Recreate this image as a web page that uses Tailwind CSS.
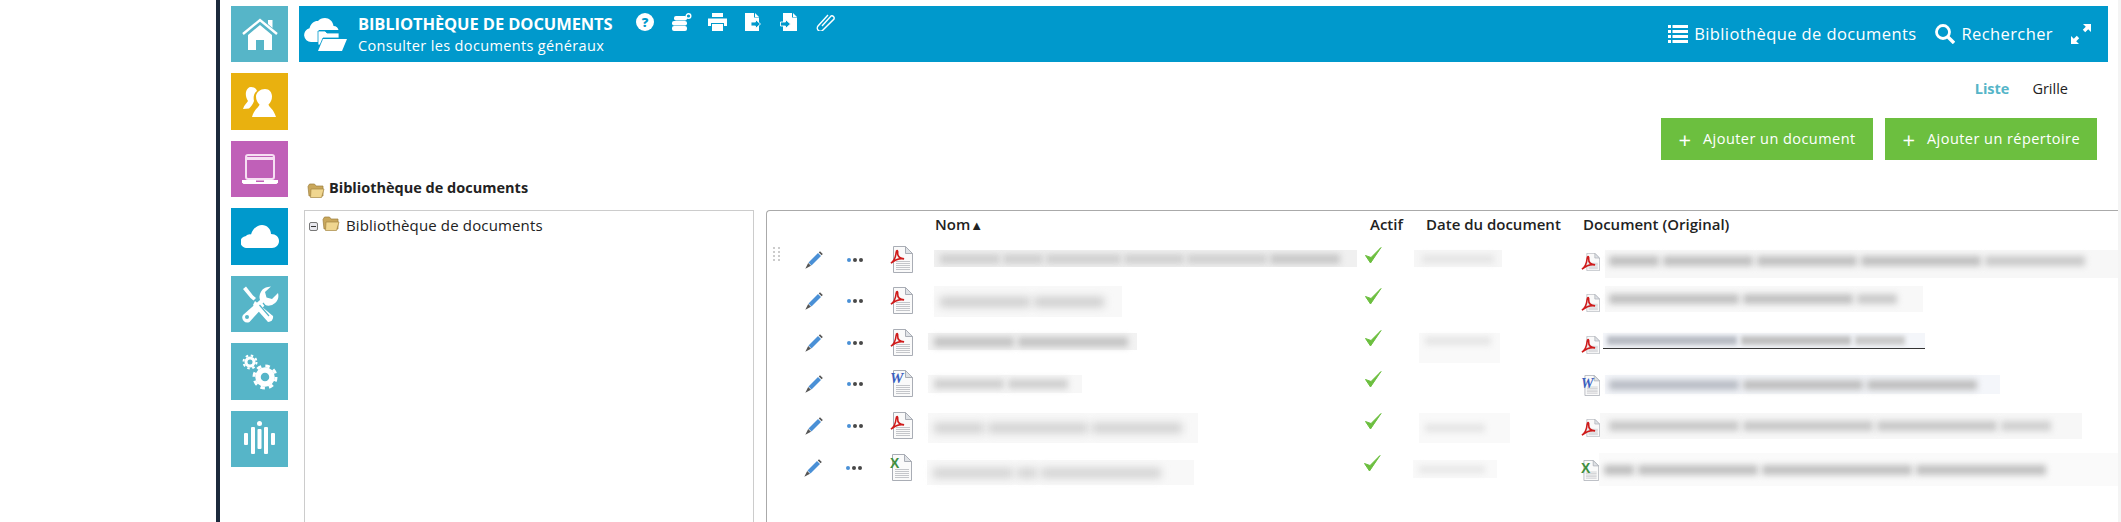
<!DOCTYPE html>
<html lang="fr">
  <head>
    <meta charset="UTF-8" />
    <script src="https://cdn.jsdelivr.net/npm/@tailwindcss/browser@4"></script>
    <title>Bibliothèque de documents</title>
  </head>
  <body class="bg-white font-['Open_Sans',sans-serif] text-[#222] overflow-hidden">
    <!-- shared icons -->
    <svg class="hidden">
      <symbol id="pencil" viewBox="0 0 18 18">
        <path d="M3.500 11.500 13 2l3 3-9.500 9.500z" fill="#4a90d6" />
        <path d="M13.800 1.400 15 .2l2.800 2.800-1.200 1.200z" fill="#555" />
        <path d="M3.200 12 6 14.800 .3 17.700z" fill="#555" />
      </symbol>
      <symbol id="dots" viewBox="0 0 16 4">
        <circle cx="2" cy="2" r="2" fill="#4a90d6" />
        <circle cx="8" cy="2" r="2" fill="#484848" />
        <circle cx="14" cy="2" r="2" fill="#484848" />
      </symbol>
      <symbol id="page" viewBox="0 0 22 27">
        <path d="M2.500.5h12l7 7v19h-19z" fill="#fafafa" stroke="#a9adb5" />
        <path d="M14.500.5v7h7z" fill="#dfe2e6" stroke="#a9adb5" />
        <path d="M5 15.500h14M5 17.500h14M5 19.500h14M5 21.500h14M5 23.500h14" stroke="#c4c6ca" />
      </symbol>
      <symbol id="adobe" viewBox="0 0 16 16">
        <path d="M1 15c3-2 5-6 5.500-11 .2-3 2-3 1.700 0C8 7 10 10 15 10.500c-4-.8-9 .5-14 4.500z" fill="none" stroke="#cf1b1b" stroke-width="1.700" />
      </symbol>
      <symbol id="check" viewBox="0 0 18 18">
        <path d="M1.500 9.500 6.500 17 17 1.500 7 11.500z" fill="#6cbf3f" stroke="#6cbf3f" stroke-linejoin="round" />
      </symbol>
      <symbol id="folder" viewBox="0 0 18 16">
        <path d="M1 4.500 2.500 2h5l1.500 2h7v10H2z" fill="#c9a75b" stroke="#9c7e3c" stroke-width=".7" />
        <path d="M4 7h13l-2.500 8.500H3.500z" fill="#f0d68f" stroke="#a58744" stroke-width=".7" />
      </symbol>
    </svg>

    <div class="flex h-[522px] w-[2121px]">
      <div class="w-[216px] shrink-0"></div>
      <div class="w-[4px] shrink-0 bg-[#1c2a3c]"></div>

      <!-- tiles -->
      <nav class="w-[79px] shrink-0 pt-[6px] pl-[11px] flex flex-col gap-[11px]">
        <a class="w-[57px] h-[56px] bg-[#56b5c8] flex items-center justify-center">
          <svg class="w-[36px] h-[32px]" viewBox="0 0 36 32" fill="#fff"><path d="M1 16 18 2l17 14" fill="none" stroke="#fff" stroke-width="2.400" /><path d="M26 2h4.500v8L26 6z" /><path d="M6 17 18 7l12 10v15h-8V22h-8v10H6z" /></svg>
        </a>
        <a class="w-[57px] h-[57px] bg-[#e9b10f] flex items-center justify-center">
          <svg class="w-[34px] h-[32px]" viewBox="0 0 34 32" fill="#fff"><path d="M8 1c3.500 0 5.500 2 6 4-3 2-4 6-3 10-1 3-3 6-5 7.500l-6 .5c1-4 4-6 5-8C3 12 2.500 9 3 6c.6-3 2.600-5 5-5z" /><path d="M22 3c4.500 0 7 3.500 7 7.500 0 3.500-1.500 6-3.500 8 .5 3 5 4 7.500 12.500H9c2-8 7-9.500 7.500-12.500-2-2-3.500-4.500-3.500-8C13 6.500 17.500 3 22 3z" /></svg>
        </a>
        <a class="w-[57px] h-[56px] bg-[#c060b8] flex items-center justify-center">
          <svg class="w-[36px] h-[30px]" viewBox="0 0 36 30" fill="#fff"><rect x="4" y="1" width="28" height="24" rx="2" fill="none" stroke="#f6dff3" stroke-width="2" /><path d="M5 3h26v3H5z" fill="#f6dff3" /><path d="M0 26h36v2.500l-1.500 1.500h-33L0 28.500z" /><path d="M14 26.500h8v1.500h-8z" fill="#c060b8" /></svg>
        </a>
        <a class="w-[57px] h-[57px] bg-[#0099cc] flex items-center justify-center">
          <svg class="w-[38px] h-[23px]" viewBox="0 0 38 23" fill="#fff"><path d="M6 23a6 6 0 0 1-1-12c1-1 3-2 5-1.500C12 3 17 0 21 0c5 0 9 4 9 9 5 0 8 3 8 7 0 4-3 7-7 7z" /></svg>
        </a>
        <a class="w-[57px] h-[56px] bg-[#56b5c8] flex items-center justify-center">
          <svg class="w-[38px] h-[37px]" viewBox="0 0 38 37" fill="#fff">
            <path d="M2 3 5 .5l7 9 3 2.500-2.500 2.500-3-2.500z" />
            <path d="M27 1a10 10 0 0 0-8 13L2 29a5 5 0 0 0 6.500 7L24 19a10 10 0 0 0 13-12l-6 6-5.500-1.500L24 6l6-5.500z" fill="#fff" />
            <circle cx="6" cy="31" r="2" fill="#56b5c8" />
            <path d="m14 15 18 15a5 5 0 0 1-5 6L12 19z" fill="#fff" />
            <path d="m18.500 19 9.500 11M22 17l9 11" stroke="#56b5c8" stroke-width="1.200" />
          </svg>
        </a>
        <a class="w-[57px] h-[57px] bg-[#56b5c8] flex items-center justify-center">
          <svg class="w-[36px] h-[36px]" viewBox="0 0 36 36" fill="none" stroke="#fff">
            <circle cx="8" cy="8" r="4" stroke-width="3" />
            <circle cx="8" cy="8" r="6.500" stroke-width="2" stroke-dasharray="2.500 2.600" />
            <circle cx="23" cy="23" r="7" stroke-width="5.500" />
            <circle cx="23" cy="23" r="11" stroke-width="3" stroke-dasharray="4.500 4.140" />
          </svg>
        </a>
        <a class="w-[57px] h-[56px] bg-[#56b5c8] flex items-center justify-center">
          <svg class="w-[32px] h-[36px]" viewBox="0 0 32 36" fill="#fff">
            <rect x="0" y="12" width="4" height="12" rx="1" />
            <rect x="7" y="6" width="4" height="27" rx="1" />
            <circle cx="15.500" cy="2.500" r="2.500" />
            <rect x="13.500" y="8" width="4" height="20" rx="1" />
            <rect x="20" y="6" width="4" height="27" rx="1" />
            <rect x="27" y="12" width="4" height="12" rx="1" />
          </svg>
        </a>
      </nav>

      <main class="w-[1819px] shrink-0 flex flex-col">
        <!-- blue header -->
        <header class="mt-[6px] h-[56px] w-[1809px] shrink-0 bg-[#0099cc] text-white flex items-center">
          <svg class="ml-[5px] w-[43px] h-[33px] shrink-0" viewBox="0 0 43 33" fill="#fff">
            <path d="M7 24a7 7 0 0 1-1.500-13.800C7 5 11 2.500 14 3c1.500-2 4-3 7-3 4 0 8 3 8.500 8 3 0 4.500 2 5 4H15v12z" />
            <path d="M14 13h7l2 2h12v5H19l-3 7h-2z" stroke="#0099cc" stroke-width=".8" />
            <path d="M19 21h24l-5 12H14z" />
          </svg>
          <div class="ml-[11px] w-[266px] shrink-0">
            <h1 class="text-[16.500px] leading-[20px] font-bold tracking-[-0.1px] uppercase">Bibliothèque de documents</h1>
            <p class="mt-[3px] text-[14.500px] leading-[18px] tracking-[0.35px]">Consulter les documents généraux</p>
          </div>
          <div class="self-start mt-[7px] flex items-start">
            <span class="ml-[12px] w-[18px] h-[18px] rounded-full bg-white text-[#0099cc] text-[13px] leading-[18px] font-extrabold text-center">?</span>
            <svg class="ml-[18px] w-[20px] h-[18px]" viewBox="0 0 20 18" fill="#fff"><rect x="2" y="3" width="13" height="4.500" rx="2" /><rect x="0" y="8" width="15" height="4.500" rx="2" /><rect x="0" y="13" width="15" height="5" rx="2" /><circle cx="16.500" cy="3" r="2.300" fill="none" stroke="#fff" stroke-width="1.400" /></svg>
            <svg class="ml-[16px] w-[19px] h-[18px]" viewBox="0 0 19 18" fill="#fff"><path d="M4 0h11v4H4zM0 5.500h19V13h-3v-3H3v3H0zM4 11h11v7H4z" /></svg>
            <svg class="ml-[18px] w-[16px] h-[18px]" viewBox="0 0 16 18"><path d="M0 0h9v4.500h5V18H0z" fill="#fff" /><path d="M10 0l4 4h-4z" fill="#fff" /><path d="M6 9h4.500V6.500L15.500 11l-5 4.500V13H6z" fill="#0099cc" stroke="#fff" stroke-width=".9" /></svg>
            <svg class="ml-[19px] w-[17px] h-[18px]" viewBox="0 0 17 18"><path d="M3 0h9v4.500h5V18H3z" fill="#fff" /><path d="M13 0l4 4h-4z" fill="#fff" /><path d="M.5 9h5V6.500l5 4.500-5 4.500V13h-5z" fill="#0099cc" stroke="#fff" stroke-width=".9" /></svg>
            <svg class="ml-[19px] w-[19px] h-[18px]" viewBox="0 0 19 18" fill="none" stroke="#fff" stroke-width="1.400"><path d="M6 13 15 3a2.300 2.300 0 0 1 3 3L7 17a3 3 0 0 1-5-4L12 2" /></svg>
          </div>

          <div class="ml-auto flex items-center text-[16.500px] leading-[20px] tracking-[0.4px]">
            <svg class="w-[20px] h-[18px]" viewBox="0 0 20 18" fill="#fff"><path d="M0 0h3v3H0zM4.500 0H20v3H4.500zM0 5h3v3H0zM4.500 5H20v3H4.500zM0 10h3v3H0zM4.500 10H20v3H4.500zM0 15h3v3H0zM4.500 15H20v3H4.500z" /></svg>
            <span class="ml-[6px]">Bibliothèque de documents</span>
            <svg class="ml-[19px] w-[20px] h-[20px]" viewBox="0 0 20 20" fill="none" stroke="#fff"><circle cx="8" cy="8" r="6.500" stroke-width="2.800" /><path d="m13 13 6 6" stroke-width="3.400" /></svg>
            <span class="ml-[6px]">Rechercher</span>
            <svg class="ml-[18px] mr-[17px] w-[20px] h-[20px]" viewBox="0 0 20 20" fill="#fff"><path d="M12 0h8v8l-2.800-2.800-3 3-2.400-2.400 3-3zM0 20v-8l2.800 2.800 3-3 2.400 2.400-3 3L8 20z" /></svg>
          </div>
        </header>

        <!-- list / grid switch -->
        <div class="mt-[17px] h-[20px] w-[1769px] flex justify-end text-[14.500px] leading-[20px] shrink-0">
          <span class="font-bold text-[#56b5c8]">Liste</span>
          <span class="ml-[23px]">Grille</span>
        </div>

        <!-- actions -->
        <div class="mt-[19px] h-[42px] w-[1798px] flex justify-end gap-[12px] shrink-0 text-white text-[14.500px] tracking-[0.45px]">
          <button class="w-[212px] h-[42px] bg-[#6cbf3f] flex items-center pl-[17px]"><span class="w-[14px] text-center text-[22px] leading-[20px]">+</span><span class="ml-[11px]">Ajouter un document</span></button>
          <button class="w-[212px] h-[42px] bg-[#6cbf3f] flex items-center pl-[17px]"><span class="w-[14px] text-center text-[22px] leading-[20px]">+</span><span class="ml-[11px]">Ajouter un répertoire</span></button>
        </div>

        <div class="mt-[18px] ml-[8px] h-[20px] flex items-center shrink-0">
          <svg class="w-[18px] h-[16px] mt-[4px]" viewBox="0 0 18 16"><use href="#folder" /></svg>
          <h2 class="ml-[4px] text-[14.500px] leading-[20px] font-bold">Bibliothèque de documents</h2>
        </div>

        <div class="mt-[12px] flex-1 flex min-h-0 pl-[5px]">
          <!-- tree -->
          <aside class="w-[450px] shrink-0 border border-b-0 border-[#ccc] pl-[4px] pt-[4px] flex items-start">
            <span class="mt-[7px] w-[9px] h-[9px] border border-[#777] rounded-[2px] bg-[#e8e8ee] flex items-center justify-center"><i class="w-[5px] h-px bg-[#333]"></i></span>
            <svg class="ml-[4px] w-[18px] h-[16px]" viewBox="0 0 18 16"><use href="#folder" /></svg>
            <span class="ml-[6px] text-[15px] leading-[20px] tracking-[0.15px]">Bibliothèque de documents</span>
          </aside>

          <!-- table -->
          <section class="ml-[12px] flex-1 min-w-0 border-l border-t border-[#aaa] rounded-tl-[4px] overflow-hidden">
            <div class="h-[28px] pb-[2px] flex items-center text-[15px] font-semibold">
              <span class="ml-[168px] w-[435px]">Nom<i class="not-italic text-[13px]">▲</i></span>
              <span class="w-[56px]">Actif</span>
              <span class="w-[157px]">Date du document</span>
              <span>Document (Original)</span>
            </div>

            <div class="h-[41px] flex items-start">
              <div class="w-[33px] pt-[8px] pl-[6px]"><div class="grid grid-cols-2 gap-[2px] w-[7px]"><i class="w-[2px] h-[2px] bg-[#ccc]"></i><i class="w-[2px] h-[2px] bg-[#ccc]"></i><i class="w-[2px] h-[2px] bg-[#ccc]"></i><i class="w-[2px] h-[2px] bg-[#ccc]"></i><i class="w-[2px] h-[2px] bg-[#ccc]"></i><i class="w-[2px] h-[2px] bg-[#ccc]"></i><i class="w-[2px] h-[2px] bg-[#ccc]"></i><i class="w-[2px] h-[2px] bg-[#ccc]"></i></div></div>
              <svg class="mt-[12px] ml-[5px] w-[18px] h-[18px] shrink-0"><use href="#pencil" /></svg>
              <svg class="mt-[19px] ml-[24px] w-[16px] h-[4px] shrink-0"><use href="#dots" /></svg>
              <div class="mt-[7px] ml-[28px] w-[22px] h-[27px] relative shrink-0"><svg class="w-[22px] h-[27px]"><use href="#page" /></svg><svg class="absolute left-[-1px] top-[3px] w-[15px] h-[15px]"><use href="#adobe" /></svg></div>
              <div class="w-[451px] shrink-0 pl-[21px]"><div class="mt-[11px] w-[423px] h-[17px] bg-[#f0f0f0] flex items-center gap-[3px] px-[6px] overflow-hidden"><i class="h-[10px] w-[60px] bg-[#d0d0d0] blur-[3px]"></i><i class="h-[10px] w-[40px] bg-[#d0d0d0] blur-[3px]"></i><i class="h-[10px] w-[75px] bg-[#d0d0d0] blur-[3px]"></i><i class="h-[10px] w-[60px] bg-[#d0d0d0] blur-[3px]"></i><i class="h-[10px] w-[80px] bg-[#d0d0d0] blur-[3px]"></i><i class="h-[10px] w-[70px] bg-[#c8c8c8] blur-[3px]"></i></div></div>
              <svg class="mt-[7px] w-[18px] h-[18px] shrink-0"><use href="#check" /></svg>
              <div class="w-[32px] shrink-0"></div>
              <div class="w-[167px] shrink-0"><div class="mt-[11px] w-[88px] h-[17px] bg-[#f6f6f6] flex items-center px-[8px]"><i class="h-[8px] w-[72px] bg-[#e4e4e4] blur-[3px]"></i></div></div>
              <div class="flex items-start shrink-0">
                <div class="mt-[14px] w-[19px] h-[18px] relative"><svg class="w-[15px] h-[18px] ml-[4px]"><use href="#page" /></svg><svg class="absolute left-0 top-[1px] w-[15px] h-[17px]"><use href="#adobe" /></svg></div>
                <div class="ml-[5px] mt-[11px] w-[513px] h-[28px] bg-[#f7f7f7] flex items-center gap-[4px] pl-[4px] pb-[6px]"><i class="h-[10px] w-[50px] bg-[#c0c0c0] blur-[3px]"></i><i class="h-[10px] w-[90px] bg-[#c0c0c0] blur-[3px]"></i><i class="h-[10px] w-[100px] bg-[#c0c0c0] blur-[3px]"></i><i class="h-[10px] w-[120px] bg-[#c0c0c0] blur-[3px]"></i><i class="h-[10px] w-[100px] bg-[#cacaca] blur-[3px]"></i></div>
              </div>
            </div>

            <div class="h-[42px] flex items-start">
              <div class="w-[33px]"></div>
              <svg class="mt-[12px] ml-[5px] w-[18px] h-[18px] shrink-0"><use href="#pencil" /></svg>
              <svg class="mt-[19px] ml-[24px] w-[16px] h-[4px] shrink-0"><use href="#dots" /></svg>
              <div class="mt-[7px] ml-[28px] w-[22px] h-[27px] relative shrink-0"><svg class="w-[22px] h-[27px]"><use href="#page" /></svg><svg class="absolute left-[-1px] top-[3px] w-[15px] h-[15px]"><use href="#adobe" /></svg></div>
              <div class="w-[451px] shrink-0 pl-[21px]"><div class="mt-[6px] w-[188px] h-[31px] bg-[#f8f8f8] flex items-center gap-[4px] px-[6px]"><i class="h-[10px] w-[90px] bg-[#cdcdcd] blur-[4px]"></i><i class="h-[10px] w-[70px] bg-[#cdcdcd] blur-[4px]"></i></div></div>
              <svg class="mt-[7px] w-[18px] h-[18px] shrink-0"><use href="#check" /></svg>
              <div class="w-[32px] shrink-0"></div>
              <div class="w-[167px] shrink-0"></div>
              <div class="flex items-start shrink-0">
                <div class="mt-[14px] w-[19px] h-[18px] relative"><svg class="w-[15px] h-[18px] ml-[4px]"><use href="#page" /></svg><svg class="absolute left-0 top-[1px] w-[15px] h-[17px]"><use href="#adobe" /></svg></div>
                <div class="ml-[5px] mt-[6px] w-[318px] h-[26px] bg-[#f8f8f8] flex items-center gap-[4px] pl-[4px]"><i class="h-[10px] w-[130px] bg-[#c0c0c0] blur-[3px]"></i><i class="h-[10px] w-[110px] bg-[#c0c0c0] blur-[3px]"></i><i class="h-[10px] w-[40px] bg-[#cacaca] blur-[3px]"></i></div>
              </div>
            </div>

            <div class="h-[41px] flex items-start">
              <div class="w-[33px]"></div>
              <svg class="mt-[12px] ml-[5px] w-[18px] h-[18px] shrink-0"><use href="#pencil" /></svg>
              <svg class="mt-[19px] ml-[24px] w-[16px] h-[4px] shrink-0"><use href="#dots" /></svg>
              <div class="mt-[7px] ml-[28px] w-[22px] h-[27px] relative shrink-0"><svg class="w-[22px] h-[27px]"><use href="#page" /></svg><svg class="absolute left-[-1px] top-[3px] w-[15px] h-[15px]"><use href="#adobe" /></svg></div>
              <div class="w-[451px] shrink-0 pl-[15px]"><div class="mt-[11px] w-[209px] h-[17px] bg-[#f2f2f2] flex items-center gap-[4px] px-[6px]"><i class="h-[10px] w-[80px] bg-[#c4c4c4] blur-[3px]"></i><i class="h-[10px] w-[110px] bg-[#c4c4c4] blur-[3px]"></i></div></div>
              <svg class="mt-[7px] w-[18px] h-[18px] shrink-0"><use href="#check" /></svg>
              <div class="w-[37px] shrink-0"></div>
              <div class="w-[162px] shrink-0"><div class="mt-[11px] w-[81px] h-[30px] bg-[#f9f9f9] pt-[4px] px-[6px]"><div class="h-[8px] w-[66px] bg-[#e4e4e4] blur-[3px]"></div></div></div>
              <div class="flex items-start shrink-0">
                <div class="mt-[14px] w-[19px] h-[18px] relative"><svg class="w-[15px] h-[18px] ml-[4px]"><use href="#page" /></svg><svg class="absolute left-0 top-[1px] w-[15px] h-[17px]"><use href="#adobe" /></svg></div>
                <div class="ml-[3px] mt-[11px] w-[322px] h-[16px] bg-[#f4f6fa] flex items-center gap-[4px] pl-[4px] border-b border-[#333]"><i class="h-[9px] w-[130px] bg-[#b8bcc4] blur-[2px]"></i><i class="h-[9px] w-[110px] bg-[#c0c0c0] blur-[2px]"></i><i class="h-[9px] w-[50px] bg-[#cacaca] blur-[2px]"></i></div>
              </div>
            </div>

            <div class="h-[42px] flex items-start">
              <div class="w-[33px]"></div>
              <svg class="mt-[12px] ml-[5px] w-[18px] h-[18px] shrink-0"><use href="#pencil" /></svg>
              <svg class="mt-[19px] ml-[24px] w-[16px] h-[4px] shrink-0"><use href="#dots" /></svg>
              <div class="mt-[7px] ml-[28px] w-[22px] h-[27px] relative shrink-0"><svg class="w-[22px] h-[27px]"><use href="#page" /></svg><svg class="absolute left-[-1px] top-[1px] w-[15px] h-[14px]" viewBox="0 0 15 14"><text x="0" y="12" font-family="Liberation Serif" font-size="15" font-weight="700" font-style="italic" fill="#3a5fc0">W</text></svg></div>
              <div class="w-[451px] shrink-0 pl-[15px]"><div class="mt-[12px] w-[154px] h-[18px] bg-[#f7f7f7] flex items-center gap-[4px] px-[6px]"><i class="h-[10px] w-[70px] bg-[#d0d0d0] blur-[3px]"></i><i class="h-[10px] w-[60px] bg-[#d0d0d0] blur-[3px]"></i></div></div>
              <svg class="mt-[7px] w-[18px] h-[18px] shrink-0"><use href="#check" /></svg>
              <div class="w-[32px] shrink-0"></div>
              <div class="w-[167px] shrink-0"></div>
              <div class="flex items-start shrink-0">
                <div class="mt-[12px] w-[19px] h-[21px] relative"><svg class="w-[17px] h-[21px] ml-[2px]"><use href="#page" /></svg><svg class="absolute left-0 top-[1px] w-[14px] h-[14px]" viewBox="0 0 14 14"><text x="0" y="12" font-family="Liberation Serif" font-size="14" font-weight="700" font-style="italic" fill="#3a5fc0">W</text></svg></div>
                <div class="ml-[5px] mt-[12px] w-[395px] h-[19px] bg-[#f4f6fa] flex items-center gap-[4px] pl-[4px]"><i class="h-[10px] w-[130px] bg-[#b8bcc4] blur-[3px]"></i><i class="h-[10px] w-[120px] bg-[#bebebe] blur-[3px]"></i><i class="h-[10px] w-[110px] bg-[#bebebe] blur-[3px]"></i></div>
              </div>
            </div>

            <div class="h-[42px] flex items-start">
              <div class="w-[33px]"></div>
              <svg class="mt-[12px] ml-[5px] w-[18px] h-[18px] shrink-0"><use href="#pencil" /></svg>
              <svg class="mt-[19px] ml-[24px] w-[16px] h-[4px] shrink-0"><use href="#dots" /></svg>
              <div class="mt-[7px] ml-[28px] w-[22px] h-[27px] relative shrink-0"><svg class="w-[22px] h-[27px]"><use href="#page" /></svg><svg class="absolute left-[-1px] top-[3px] w-[15px] h-[15px]"><use href="#adobe" /></svg></div>
              <div class="w-[451px] shrink-0 pl-[15px]"><div class="mt-[8px] w-[270px] h-[30px] bg-[#f8f8f8] flex items-center gap-[4px] px-[6px]"><i class="h-[10px] w-[50px] bg-[#d0d0d0] blur-[4px]"></i><i class="h-[10px] w-[100px] bg-[#d0d0d0] blur-[4px]"></i><i class="h-[10px] w-[90px] bg-[#d0d0d0] blur-[4px]"></i></div></div>
              <svg class="mt-[7px] w-[18px] h-[18px] shrink-0"><use href="#check" /></svg>
              <div class="w-[37px] shrink-0"></div>
              <div class="w-[162px] shrink-0"><div class="mt-[8px] w-[91px] h-[30px] bg-[#f9f9f9] flex items-center px-[6px]"><i class="h-[8px] w-[60px] bg-[#e4e4e4] blur-[3px]"></i></div></div>
              <div class="flex items-start shrink-0">
                <div class="mt-[14px] w-[19px] h-[18px] relative"><svg class="w-[15px] h-[18px] ml-[4px]"><use href="#page" /></svg><svg class="absolute left-0 top-[1px] w-[15px] h-[17px]"><use href="#adobe" /></svg></div>
                <div class="mt-[8px] w-[482px] h-[26px] bg-[#f7f7f7] flex items-center gap-[4px] pl-[9px]"><i class="h-[10px] w-[130px] bg-[#c8c8c8] blur-[3px]"></i><i class="h-[10px] w-[130px] bg-[#c8c8c8] blur-[3px]"></i><i class="h-[10px] w-[120px] bg-[#c8c8c8] blur-[3px]"></i><i class="h-[10px] w-[50px] bg-[#d0d0d0] blur-[3px]"></i></div>
              </div>
            </div>

            <div class="h-[42px] flex items-start">
              <div class="w-[33px]"></div>
              <svg class="mt-[12px] ml-[5px] w-[18px] h-[18px] shrink-0"><use href="#pencil" /></svg>
              <svg class="mt-[19px] ml-[24px] w-[16px] h-[4px] shrink-0"><use href="#dots" /></svg>
              <div class="mt-[7px] ml-[28px] w-[22px] h-[27px] relative shrink-0"><svg class="w-[22px] h-[27px]"><use href="#page" /></svg><svg class="absolute left-[-1px] top-[2px] w-[14px] h-[14px]" viewBox="0 0 14 14"><text x="1" y="12" font-family="Liberation Sans" font-size="14" font-weight="700" fill="#3f8f3f">X</text></svg></div>
              <div class="w-[451px] shrink-0 pl-[15px]"><div class="mt-[13px] w-[267px] h-[25px] bg-[#f8f8f8] flex items-center gap-[4px] px-[6px]"><i class="h-[10px] w-[80px] bg-[#d2d2d2] blur-[4px]"></i><i class="h-[10px] w-[20px] bg-[#d2d2d2] blur-[4px]"></i><i class="h-[10px] w-[120px] bg-[#d2d2d2] blur-[4px]"></i></div></div>
              <svg class="mt-[7px] w-[18px] h-[18px] shrink-0"><use href="#check" /></svg>
              <div class="w-[32px] shrink-0"></div>
              <div class="w-[167px] shrink-0"><div class="mt-[13px] w-[84px] h-[18px] bg-[#f9f9f9] flex items-center px-[6px]"><i class="h-[7px] w-[66px] bg-[#e6e6e6] blur-[3px]"></i></div></div>
              <div class="flex items-start shrink-0">
                <div class="mt-[13px] w-[19px] h-[21px] relative"><svg class="w-[17px] h-[21px] ml-[2px]"><use href="#page" /></svg><svg class="absolute left-0 top-[1px] w-[14px] h-[14px]" viewBox="0 0 14 14"><text x="1" y="12" font-family="Liberation Sans" font-size="14" font-weight="700" fill="#3f8f3f">X</text></svg></div>
                <div class="mt-[6px] w-[519px] h-[33px] bg-[#fafafa] flex items-center gap-[4px] pl-[5px]"><i class="h-[10px] w-[30px] bg-[#bebebe] blur-[3px]"></i><i class="h-[10px] w-[120px] bg-[#c0c0c0] blur-[3px]"></i><i class="h-[10px] w-[150px] bg-[#c0c0c0] blur-[3px]"></i><i class="h-[10px] w-[130px] bg-[#c0c0c0] blur-[3px]"></i></div>
              </div>
            </div>
          </section>
        </div>
      </main>
      <div class="w-[3px] shrink-0 bg-[#f4f4f4]"></div>
    </div>
  </body>
</html>
